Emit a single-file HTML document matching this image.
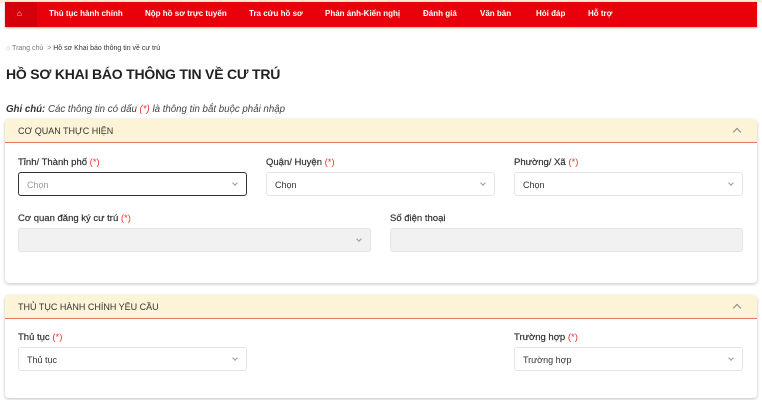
<!DOCTYPE html>
<html><head><meta charset="utf-8"><style>
*{box-sizing:border-box;margin:0;padding:0}
body{width:762px;height:400px;overflow:hidden;background:#fff;font-family:"Liberation Sans",sans-serif;position:relative;color:#222}
.top{position:absolute;left:0;top:0;width:762px;height:3px;background:#fbeed0}
.nav{position:absolute;left:5px;top:2px;width:752px;height:25px;background:#e8000b;box-shadow:0 1px 2px rgba(0,0,0,.3)}
.home{position:absolute;left:0;top:0;width:32px;height:25px;background:#d4000a}
.nav span{position:absolute;top:7px;color:#fff;font-size:8px;font-weight:bold;white-space:nowrap}
.bc{position:absolute;left:6px;top:45px;font-size:7px;color:#777}
h1{position:absolute;left:6px;top:66px;font-size:14px;font-weight:bold;color:#222;letter-spacing:-0.2px}
.note{position:absolute;left:6px;top:104px;font-size:9.7px;font-style:italic;color:#444}
.card{position:absolute;left:5px;width:752px;background:#fff;border-radius:4px;box-shadow:0 1px 3px rgba(0,0,0,.25)}
.hd{height:24px;background:#fdf3d7;border-bottom:1.5px solid #e07a62;border-radius:4px 4px 0 0;font-size:9px;color:#333;padding:7px 0 0 13px;position:relative}
.hd i{position:absolute;right:17px;top:10px;width:6px;height:6px;border-left:1.2px solid #888;border-top:1.2px solid #888;transform:rotate(45deg)}
.lb{position:absolute;font-size:9.5px;color:#333;-webkit-text-stroke:0.2px #333}
.lb b{color:#e33;font-weight:normal;-webkit-text-stroke:0}
.sel{position:absolute;height:24px;border:1px solid #e4e4e4;border-radius:3px;background:#fff;font-size:9px;color:#333;padding:7px 0 0 8px}
.sel:after{content:"";position:absolute;right:9px;top:8px;width:3px;height:3px;border-right:1px solid #999;border-bottom:1px solid #999;transform:rotate(45deg)}
.dis{background:#f1f1f1}
.nochev:after{display:none}
</style></head><body>
<div class="top"></div>
<div class="nav"><div class="home"></div>
<span style="left:12px;font-size:8px">⌂</span>
<span style="left:44px">Thủ tục hành chính</span>
<span style="left:140px">Nộp hồ sơ trực tuyến</span>
<span style="left:244px">Tra cứu hồ sơ</span>
<span style="left:320px">Phản ánh-Kiến nghị</span>
<span style="left:418px">Đánh giá</span>
<span style="left:475px">Văn bản</span>
<span style="left:531px">Hỏi đáp</span>
<span style="left:583px">Hỗ trợ</span>
</div>
<div class="bc"><span style="color:#e88">⌂</span> Trang chủ &nbsp;&gt; <span style="color:#333">Hồ sơ Khai báo thông tin về cư trú</span></div>
<h1>HỒ SƠ KHAI BÁO THÔNG TIN VỀ CƯ TRÚ</h1>
<div class="note"><b style="color:#333">Ghi chú:</b> Các thông tin có dấu <span style="color:#e33">(*)</span> là thông tin bắt buộc phải nhập</div>

<div class="card" style="top:119px;height:164px">
<div class="hd">CƠ QUAN THỰC HIỆN<i></i></div>
<div class="lb" style="left:13px;top:38px">Tỉnh/ Thành phố <b>(*)</b></div>
<div class="sel" style="left:13px;top:53px;width:229px;border:1.5px solid #333;color:#999">Chọn</div>
<div class="lb" style="left:261px;top:38px">Quận/ Huyện <b>(*)</b></div>
<div class="sel" style="left:261px;top:53px;width:229px">Chọn</div>
<div class="lb" style="left:509px;top:38px">Phường/ Xã <b>(*)</b></div>
<div class="sel" style="left:509px;top:53px;width:229px">Chọn</div>
<div class="lb" style="left:13px;top:94px">Cơ quan đăng ký cư trú <b>(*)</b></div>
<div class="sel dis" style="left:13px;top:109px;width:353px"></div>
<div class="lb" style="left:385px;top:94px">Số điện thoại</div>
<div class="sel dis nochev" style="left:385px;top:109px;width:353px;"></div>
</div>

<div class="card" style="top:295px;height:103px">
<div class="hd">THỦ TỤC HÀNH CHÍNH YÊU CẦU<i></i></div>
<div class="lb" style="left:13px;top:37px">Thủ tục <b>(*)</b></div>
<div class="sel" style="left:13px;top:52px;width:229px">Thủ tục</div>
<div class="lb" style="left:509px;top:37px">Trường hợp <b>(*)</b></div>
<div class="sel" style="left:509px;top:52px;width:229px">Trường hợp</div>
</div>
</body></html>
